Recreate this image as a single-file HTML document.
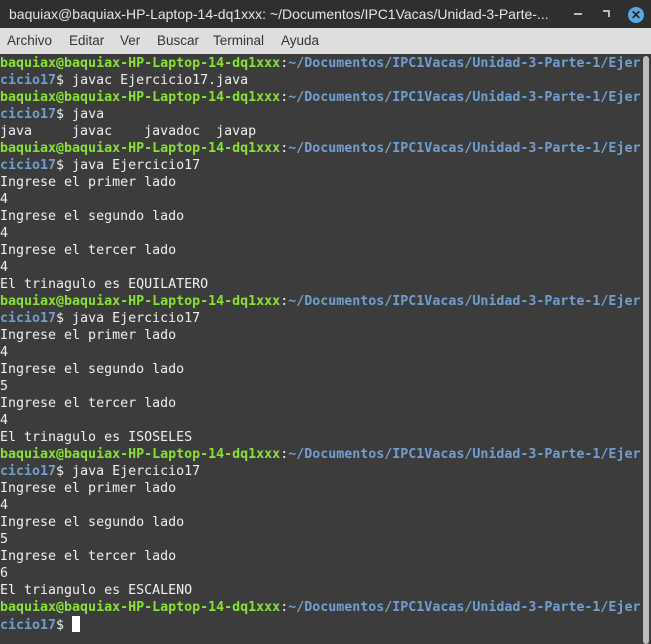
<!DOCTYPE html><html><head><style>
body{margin:0;width:651px;height:644px;overflow:hidden;background:#3c3c3c;font-family:"Liberation Sans",sans-serif}
#t{position:absolute;left:0;top:0;width:651px;height:28px;background:#2f2f2f;color:#e6e6e6;font-size:14px;line-height:28px}
#m{position:absolute;left:0;top:28px;width:651px;height:26px;background:#dedede;color:#333;font-size:13.5px;line-height:26px}
#m span{position:absolute;top:0}
pre{margin:0;position:absolute;left:0;top:55px;font-family:"DejaVu Sans Mono","Liberation Mono",monospace;font-size:13.3px;line-height:17px;color:#f0f0f0}
.g{color:#8ae234;font-weight:bold}.b{color:#729fcf;font-weight:bold}
#sb{position:absolute;left:643px;top:56px;width:6px;height:588px;background:#bcbcbc;border-radius:3px}
.cur{display:inline-block;width:8px;height:16px;background:#fff;vertical-align:-3px}
</style></head><body>
<div id="t"><span style="margin-left:9px">baquiax@baquiax-HP-Laptop-14-dq1xxx: ~/Documentos/IPC1Vacas/Unidad-3-Parte-...</span>
<div style="position:absolute;left:574px;top:13px;width:8px;height:2px;background:#bbb"></div>
<div style="position:absolute;left:603px;top:10px;width:5px;height:5px;border-top:2px solid #bbb;border-right:2px solid #bbb"></div>
<div style="position:absolute;left:628px;top:7px;width:16px;height:16px;border-radius:50%;background:#5aa8dc;color:#222;font-size:12px;line-height:16px;text-align:center;font-weight:bold">✕</div></div>
<div id="m"><span style="left:7px">Archivo</span><span style="left:69px">Editar</span><span style="left:120px">Ver</span><span style="left:157px">Buscar</span><span style="left:213px">Terminal</span><span style="left:281px">Ayuda</span></div>
<pre><span class="g">baquiax@baquiax-HP-Laptop-14-dq1xxx</span>:<span class="b">~/Documentos/IPC1Vacas/Unidad-3-Parte-1/Ejer
cicio17</span>$ javac Ejercicio17.java
<span class="g">baquiax@baquiax-HP-Laptop-14-dq1xxx</span>:<span class="b">~/Documentos/IPC1Vacas/Unidad-3-Parte-1/Ejer
cicio17</span>$ java
java     javac    javadoc  javap
<span class="g">baquiax@baquiax-HP-Laptop-14-dq1xxx</span>:<span class="b">~/Documentos/IPC1Vacas/Unidad-3-Parte-1/Ejer
cicio17</span>$ java Ejercicio17
Ingrese el primer lado
4
Ingrese el segundo lado
4
Ingrese el tercer lado
4
El trinagulo es EQUILATERO
<span class="g">baquiax@baquiax-HP-Laptop-14-dq1xxx</span>:<span class="b">~/Documentos/IPC1Vacas/Unidad-3-Parte-1/Ejer
cicio17</span>$ java Ejercicio17
Ingrese el primer lado
4
Ingrese el segundo lado
5
Ingrese el tercer lado
4
El trinagulo es ISOSELES
<span class="g">baquiax@baquiax-HP-Laptop-14-dq1xxx</span>:<span class="b">~/Documentos/IPC1Vacas/Unidad-3-Parte-1/Ejer
cicio17</span>$ java Ejercicio17
Ingrese el primer lado
4
Ingrese el segundo lado
5
Ingrese el tercer lado
6
El triangulo es ESCALENO
<span class="g">baquiax@baquiax-HP-Laptop-14-dq1xxx</span>:<span class="b">~/Documentos/IPC1Vacas/Unidad-3-Parte-1/Ejer
cicio17</span>$ <span class="cur"></span></pre>
<div id="sb"></div>
</body></html>
